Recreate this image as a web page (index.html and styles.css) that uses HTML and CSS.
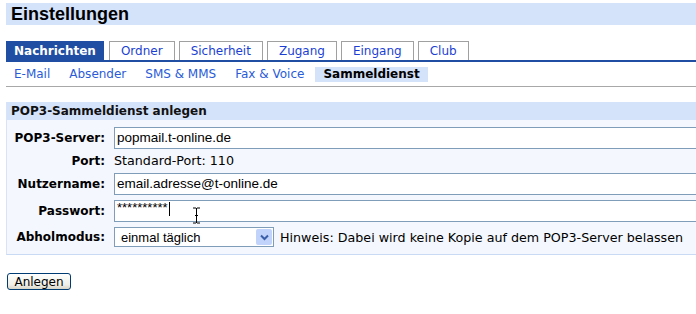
FILE: index.html
```html
<!DOCTYPE html>
<html lang="de">
<head>
    <meta charset="UTF-8">
    <meta name="viewport" content="width=device-width, initial-scale=1.0">
    <title>Einstellungen - Sammeldienst</title>
    <link rel="stylesheet" href="styles.css">
</head>
<body>
    <div class="page">
        <h1 class="page-title">Einstellungen</h1>

        <!-- Hauptreiter -->
        <ul class="tabs">
            <li class="tab active">Nachrichten</li>
            <li class="tab">Ordner</li>
            <li class="tab">Sicherheit</li>
            <li class="tab">Zugang</li>
            <li class="tab">Eingang</li>
            <li class="tab">Club</li>
        </ul>

        <!-- Unterreiter -->
        <ul class="subnav">
            <li>E-Mail</li>
            <li>Absender</li>
            <li>SMS &amp; MMS</li>
            <li>Fax &amp; Voice</li>
            <li class="current">Sammeldienst</li>
        </ul>

        <div class="box">
            <h2 class="box-title">POP3-Sammeldienst anlegen</h2>
            <div class="form-grid">
                <label class="lbl">POP3-Server:</label>
                <div class="field"><span class="input">popmail.t-online.de</span></div>

                <label class="lbl">Port:</label>
                <div class="field plain">Standard-Port: 110</div>

                <label class="lbl">Nutzername:</label>
                <div class="field"><span class="input">email.adresse@t-online.de</span></div>

                <label class="lbl">Passwort:</label>
                <div class="field">
                    <span class="input pw"><span class="stars">**********</span><span class="caret"></span></span>
                    <!-- Mauszeiger (I-Beam) ueber dem Feld -->
                    <svg class="ibeam" width="9" height="17" viewBox="0 0 9 17">
                        <path d="M1 1h3M5 1h3M4.5 1v15M1 16h3M5 16h3M3 8.5h3" stroke="#000" stroke-width="1" fill="none"/>
                    </svg>
                </div>

                <label class="lbl">Abholmodus:</label>
                <div class="field row">
                    <span class="select">
                        <span class="select-text">einmal täglich</span>
                        <span class="select-btn">
                            <svg width="9" height="7" viewBox="0 0 9 7"><path d="M1 1.5l3.5 3.5 3.5-3.5" stroke="#3a5fa8" stroke-width="2" fill="none"/></svg>
                        </span>
                    </span>
                    <span class="hint">Hinweis: Dabei wird keine Kopie auf dem POP3-Server belassen</span>
                </div>
            </div>
        </div>

        <button class="btn">Anlegen</button>
    </div>
</body>
</html>
```

FILE: styles.css
```css
/* Grundlayout */
html, body {
    margin: 0;
    padding: 0;
    overflow: hidden;
    background-color: #ffffff;
}
body {
    font-family: "DejaVu Sans", Verdana, sans-serif;
    font-size: 12px;
    color: #000000;
}
.page {
    width: 760px;
    padding: 3px 0 0 6px;
}

/* Titelleiste */
.page-title {
    margin: 0;
    height: 22px;
    line-height: 22px;
    padding-left: 5px;
    background-color: #d4e2fa;
    font-family: "Liberation Sans", Arial, sans-serif;
    font-size: 18px;
    font-weight: bold;
    color: #000000;
}

/* Hauptreiter */
.tabs {
    list-style: none;
    margin: 15px 0 0 0;
    padding: 0;
    display: flex;
    gap: 4px;
    border-bottom: 2px solid #1f4ea3;
}
.tab {
    height: 18px;
    line-height: 18px;
    padding: 0 11px;
    border: 1px solid #a0a0a0;
    border-bottom: none;
    background-color: #ffffff;
    color: #1c3fd3;
    font-size: 12px;
    margin-top: 1px;
}
.tab.active {
    background-color: #1f4ea3;
    border-color: #1f4ea3;
    color: #ffffff;
    font-weight: bold;
    padding: 0 7px;
    margin-right: 1px;
}

/* Unterreiter */
.subnav {
    list-style: none;
    margin: 0;
    padding: 5px 0 4px 0;
    display: flex;
    gap: 3px;
    border-bottom: 1px solid #a8a8a8;
}
.subnav li {
    padding: 0 8px;
    line-height: 15px;
    color: #2a5bd8;
}
.subnav li.current {
    background-color: #d4e2fa;
    color: #000000;
    font-weight: bold;
}

/* Formularkasten */
.box {
    margin-top: 15px;
    border-left: 1px solid #d8e4f6;
    border-bottom: 1px solid #c8daf4;
    background-color: #f4f7fd;
}
.box-title {
    margin: 0;
    height: 18px;
    line-height: 18px;
    padding-left: 4px;
    background-color: #d4e2fa;
    font-size: 12px;
    font-weight: bold;
    color: #111111;
}
.form-grid {
    display: grid;
    grid-template-columns: 98px 1fr;
    column-gap: 9px;
    row-gap: 5px;
    padding: 7px 0 7px 0;
    align-items: center;
}
.lbl {
    text-align: right;
    font-weight: bold;
}
.field {
    position: relative;
}
.field.plain {
    line-height: 14px;
    font-size: 12.7px;
}
.field.row {
    display: flex;
    align-items: center;
    gap: 6px;
}
.input {
    display: block;
    box-sizing: border-box;
    height: 22px;
    line-height: 20px;
    padding-left: 2px;
    border: 1px solid #7f9db9;
    background-color: #ffffff;
    font-family: "Liberation Sans", Arial, sans-serif;
    font-size: 13.5px;
}
.pw {
    display: flex;
    align-items: flex-start;
}
.stars {
    font-size: 13px;
    line-height: 14px;
}
.caret {
    display: inline-block;
    width: 1px;
    height: 14px;
    margin: 1px 0 0 1px;
    background-color: #000000;
}
.ibeam {
    position: absolute;
    left: 78px;
    top: 7px;
}

/* Auswahlfeld */
.select {
    box-sizing: border-box;
    width: 160px;
    height: 20px;
    display: flex;
    align-items: center;
    border: 1px solid #7f9db9;
    background-color: #ffffff;
    padding: 0 1px 0 6px;
}
.select-text {
    flex: 1;
    font-family: "Liberation Sans", Arial, sans-serif;
    font-size: 13px;
}
.select-btn {
    width: 16px;
    height: 16px;
    display: flex;
    align-items: center;
    justify-content: center;
    background-color: #c1d3fb;
    border-radius: 2px;
}
.hint {
    white-space: nowrap;
    font-size: 12.7px;
}

/* Knopf */
.btn {
    margin: 18px 0 0 1px;
    width: 64px;
    height: 17px;
    padding: 0;
    border: 1px solid #003c74;
    border-radius: 3px;
    background: linear-gradient(#ffffff, #f0efe8 70%, #d8d5c8);
    font-family: "DejaVu Sans", Verdana, sans-serif;
    font-size: 12px;
    line-height: 14px;
    color: #000000;
}
```
